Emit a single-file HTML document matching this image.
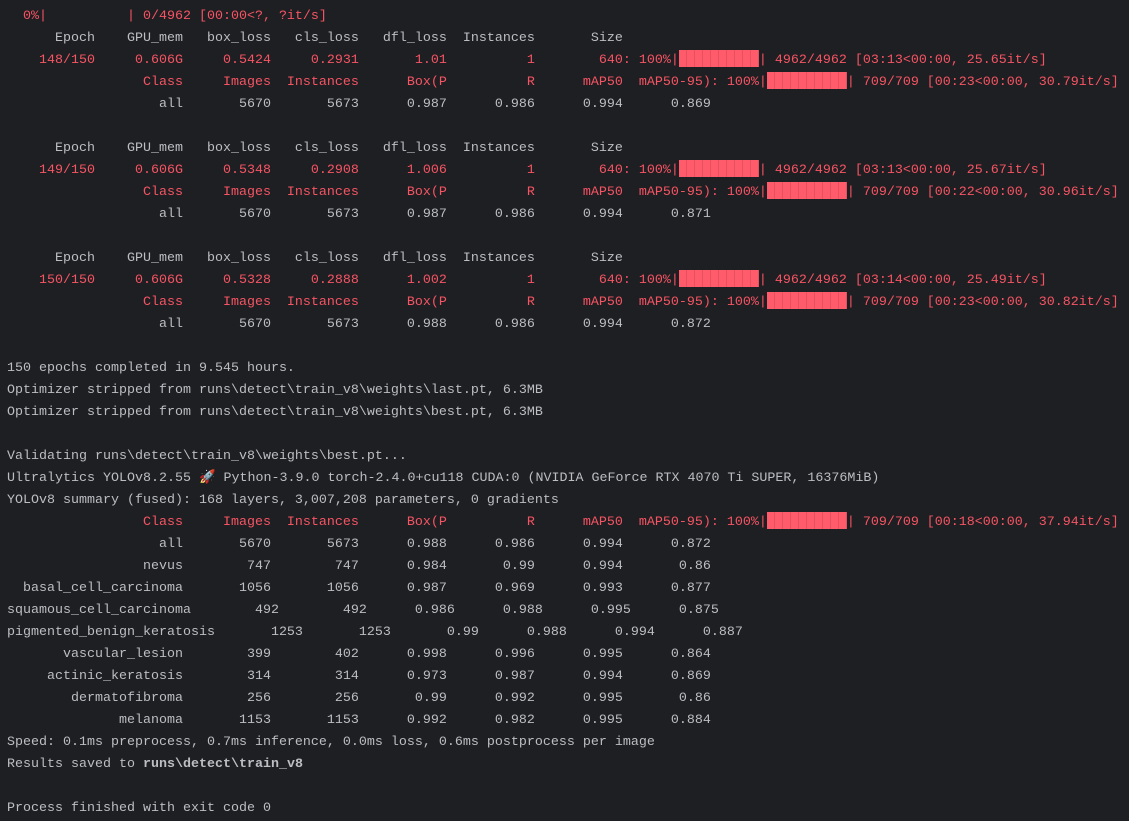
<!DOCTYPE html>
<html><head><meta charset="utf-8"><style>
html,body{margin:0;padding:0;background:#1e1f22;width:1129px;height:821px;overflow:hidden}
.t{position:absolute;left:7px;top:6px;font-family:"Liberation Mono","DejaVu Sans Mono",monospace;font-size:13.33px;line-height:22px;color:#bcbec4}
.l{white-space:pre;height:22px}
.r{color:#f75464}
.b{display:inline-block;width:80px;height:17px;vertical-align:-4px;background:repeating-linear-gradient(90deg,#ff5b6b 0 7px,#e8505f 7px 8px)}
b{font-weight:bold}
</style></head><body><div class="t">
<div class="l r">  0%|          | 0/4962 [00:00&lt;?, ?it/s]</div>
<div class="l">      Epoch    GPU_mem   box_loss   cls_loss   dfl_loss  Instances       Size</div>
<div class="l r">    148/150     0.606G     0.5424     0.2931       1.01          1        640: 100%|<span class="b"></span>| 4962/4962 [03:13&lt;00:00, 25.65it/s]</div>
<div class="l r">                 Class     Images  Instances      Box(P          R      mAP50  mAP50-95): 100%|<span class="b"></span>| 709/709 [00:23&lt;00:00, 30.79it/s]</div>
<div class="l">                   all       5670       5673      0.987      0.986      0.994      0.869</div>
<div class="l"></div>
<div class="l">      Epoch    GPU_mem   box_loss   cls_loss   dfl_loss  Instances       Size</div>
<div class="l r">    149/150     0.606G     0.5348     0.2908      1.006          1        640: 100%|<span class="b"></span>| 4962/4962 [03:13&lt;00:00, 25.67it/s]</div>
<div class="l r">                 Class     Images  Instances      Box(P          R      mAP50  mAP50-95): 100%|<span class="b"></span>| 709/709 [00:22&lt;00:00, 30.96it/s]</div>
<div class="l">                   all       5670       5673      0.987      0.986      0.994      0.871</div>
<div class="l"></div>
<div class="l">      Epoch    GPU_mem   box_loss   cls_loss   dfl_loss  Instances       Size</div>
<div class="l r">    150/150     0.606G     0.5328     0.2888      1.002          1        640: 100%|<span class="b"></span>| 4962/4962 [03:14&lt;00:00, 25.49it/s]</div>
<div class="l r">                 Class     Images  Instances      Box(P          R      mAP50  mAP50-95): 100%|<span class="b"></span>| 709/709 [00:23&lt;00:00, 30.82it/s]</div>
<div class="l">                   all       5670       5673      0.988      0.986      0.994      0.872</div>
<div class="l"></div>
<div class="l">150 epochs completed in 9.545 hours.</div>
<div class="l">Optimizer stripped from runs\detect\train_v8\weights\last.pt, 6.3MB</div>
<div class="l">Optimizer stripped from runs\detect\train_v8\weights\best.pt, 6.3MB</div>
<div class="l"></div>
<div class="l">Validating runs\detect\train_v8\weights\best.pt...</div>
<div class="l">Ultralytics YOLOv8.2.55 🚀 Python-3.9.0 torch-2.4.0+cu118 CUDA:0 (NVIDIA GeForce RTX 4070 Ti SUPER, 16376MiB)</div>
<div class="l">YOLOv8 summary (fused): 168 layers, 3,007,208 parameters, 0 gradients</div>
<div class="l r">                 Class     Images  Instances      Box(P          R      mAP50  mAP50-95): 100%|<span class="b"></span>| 709/709 [00:18&lt;00:00, 37.94it/s]</div>
<div class="l">                   all       5670       5673      0.988      0.986      0.994      0.872</div>
<div class="l">                 nevus        747        747      0.984       0.99      0.994       0.86</div>
<div class="l">  basal_cell_carcinoma       1056       1056      0.987      0.969      0.993      0.877</div>
<div class="l">squamous_cell_carcinoma        492        492      0.986      0.988      0.995      0.875</div>
<div class="l">pigmented_benign_keratosis       1253       1253       0.99      0.988      0.994      0.887</div>
<div class="l">       vascular_lesion        399        402      0.998      0.996      0.995      0.864</div>
<div class="l">     actinic_keratosis        314        314      0.973      0.987      0.994      0.869</div>
<div class="l">        dermatofibroma        256        256       0.99      0.992      0.995       0.86</div>
<div class="l">              melanoma       1153       1153      0.992      0.982      0.995      0.884</div>
<div class="l">Speed: 0.1ms preprocess, 0.7ms inference, 0.0ms loss, 0.6ms postprocess per image</div>
<div class="l">Results saved to <b>runs\detect\train_v8</b></div>
<div class="l"></div>
<div class="l">Process finished with exit code 0</div>
</div></body></html>
